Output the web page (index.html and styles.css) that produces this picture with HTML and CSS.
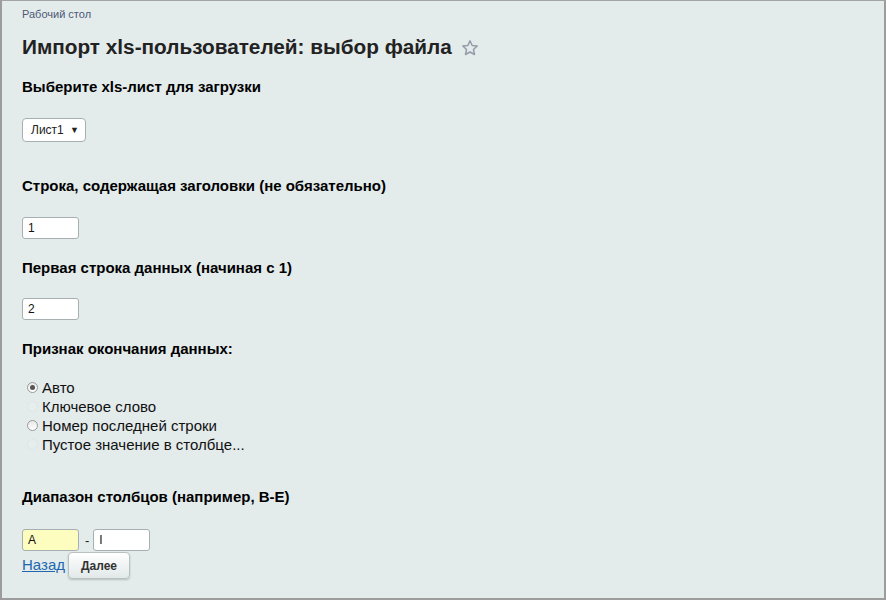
FILE: index.html
```html
<!DOCTYPE html>
<html lang="ru">
<head>
<meta charset="utf-8">
<title>Импорт xls-пользователей</title>
<link rel="stylesheet" href="styles.css">
</head>
<body>
<div class="frame">
  <div class="crumbs"><a href="#" class="crumb">Рабочий стол</a></div>
  <h1 class="title">Импорт xls-пользователей: выбор файла
    <svg class="star" width="18" height="18" viewBox="0 0 24 24"><path d="M12 2.5l2.9 6.2 6.7.7-5 4.6 1.4 6.7L12 17.3l-6 3.4 1.4-6.7-5-4.6 6.7-.7z" fill="none" stroke="#939ca8" stroke-width="2" stroke-linejoin="round"/></svg>
  </h1>

  <h3 class="label l-sheet">Выберите xls-лист для загрузки</h3>
  <div class="select">Лист1 <span class="arrow">▼</span></div>

  <h3 class="label l-head">Строка, содержащая заголовки (не обязательно)</h3>
  <div class="field">1</div>

  <h3 class="label l-first">Первая строка данных (начиная с 1)</h3>
  <div class="field">2</div>

  <h3 class="label l-end">Признак окончания данных:</h3>
  <div class="radios">
    <div class="radio"><span class="dot checked"></span>Авто</div>
    <div class="radio"><span class="dot faint"></span>Ключевое слово</div>
    <div class="radio"><span class="dot"></span>Номер последней строки</div>
    <div class="radio"><span class="dot faint"></span>Пустое значение в столбце...</div>
  </div>

  <h3 class="label l-range">Диапазон столбцов (например, B-E)</h3>
  <div class="range">
    <div class="field yellow">A</div>
    <span class="dash">-</span>
    <div class="field">I</div>
  </div>
  <div class="actions">
    <a href="#" class="back">Назад</a>
    <button class="next">Далее</button>
  </div>
</div>
</body>
</html>
```

FILE: styles.css
```css
html, body {
  margin: 0;
  padding: 0;
}
body {
  font-family: "Liberation Sans", Arial, sans-serif;
  background: #fff;
}
.frame {
  box-sizing: border-box;
  width: 886px;
  height: 600px;
  border-top: 1px solid #a4a4a4;
  border-left: 2px solid #9c9c9c;
  border-right: 2px solid #9c9c9c;
  border-bottom: 2px solid #9c9c9c;
  background: #e3ebeb;
  padding: 6px 0 0 20px;
  color: #000;
}
.crumbs {
  font-size: 11px;
  line-height: 14px;
}
.crumb {
  color: #4c5a78;
  text-decoration: none;
}
.title {
  margin: 14px 0 0;
  font-size: 20.75px;
  line-height: 24px;
  font-weight: bold;
  color: #222;
  display: flex;
  align-items: center;
}
.star {
  margin-left: 9px;
  margin-top: 1px;
}
.label {
  margin: 0;
  font-size: 15px;
  line-height: 18px;
  font-weight: bold;
  color: #000;
}
.l-sheet { margin-top: 19px; }
.l-head { margin-top: 35px; }
.l-first { margin-top: 20px; }
.l-end { margin-top: 20px; }
.l-range { margin-top: 34px; }

.select {
  margin-top: 22px;
  box-sizing: border-box;
  width: 64px;
  height: 24px;
  border: 1px solid #a7b0b0;
  border-radius: 4px;
  background: #fff;
  font-size: 12px;
  line-height: 22px;
  padding-left: 8px;
  color: #222;
  position: relative;
}
.arrow {
  position: absolute;
  right: 6px;
  top: 0;
  font-size: 9px;
}
.field {
  margin-top: 22px;
  box-sizing: border-box;
  width: 57px;
  height: 22px;
  border: 1px solid #a7b0b0;
  border-radius: 3px;
  background: #fff;
  font-size: 12px;
  line-height: 20px;
  padding-left: 5px;
  color: #111;
}
.l-first + .field { margin-top: 21px; }
.radios {
  margin-top: 20px;
}
.radio {
  display: flex;
  align-items: center;
  font-size: 15px;
  line-height: 19px;
  color: #111;
}
.dot {
  box-sizing: border-box;
  width: 11px;
  height: 11px;
  border-radius: 50%;
  border: 1px solid #9a9a9a;
  background: linear-gradient(#e8e8e8, #fff);
  margin: 0 4px 0 5px;
  position: relative;
}
.dot.checked::after {
  content: "";
  position: absolute;
  left: 2px;
  top: 2px;
  width: 5px;
  height: 5px;
  border-radius: 50%;
  background: #555;
}
.dot.faint {
  border-color: #dfe6e6;
  background: #e6eded;
}
.range {
  display: flex;
  align-items: center;
  margin-top: 23px;
}
.range .field {
  margin-top: 0;
}
.yellow {
  background: #fdfdc0;
}
.dash {
  margin: 0 4px 0 6px;
  font-size: 13px;
  color: #222;
}
.actions {
  display: flex;
  align-items: flex-start;
  margin-top: 1px;
}
.back {
  font-size: 15px;
  color: #2067b0;
  text-decoration: underline;
  margin-top: 4px;
}
.next {
  margin-left: 3px;
  width: 62px;
  height: 27px;
  border: 1px solid #b8c0c0;
  border-radius: 4px;
  background: linear-gradient(#ffffff, #e2e8e8);
  box-shadow: 0 1px 2px rgba(0,0,0,0.2);
  font-family: "Liberation Sans", Arial, sans-serif;
  font-size: 12px;
  font-weight: bold;
  color: #333;
  padding: 0;
}
```
